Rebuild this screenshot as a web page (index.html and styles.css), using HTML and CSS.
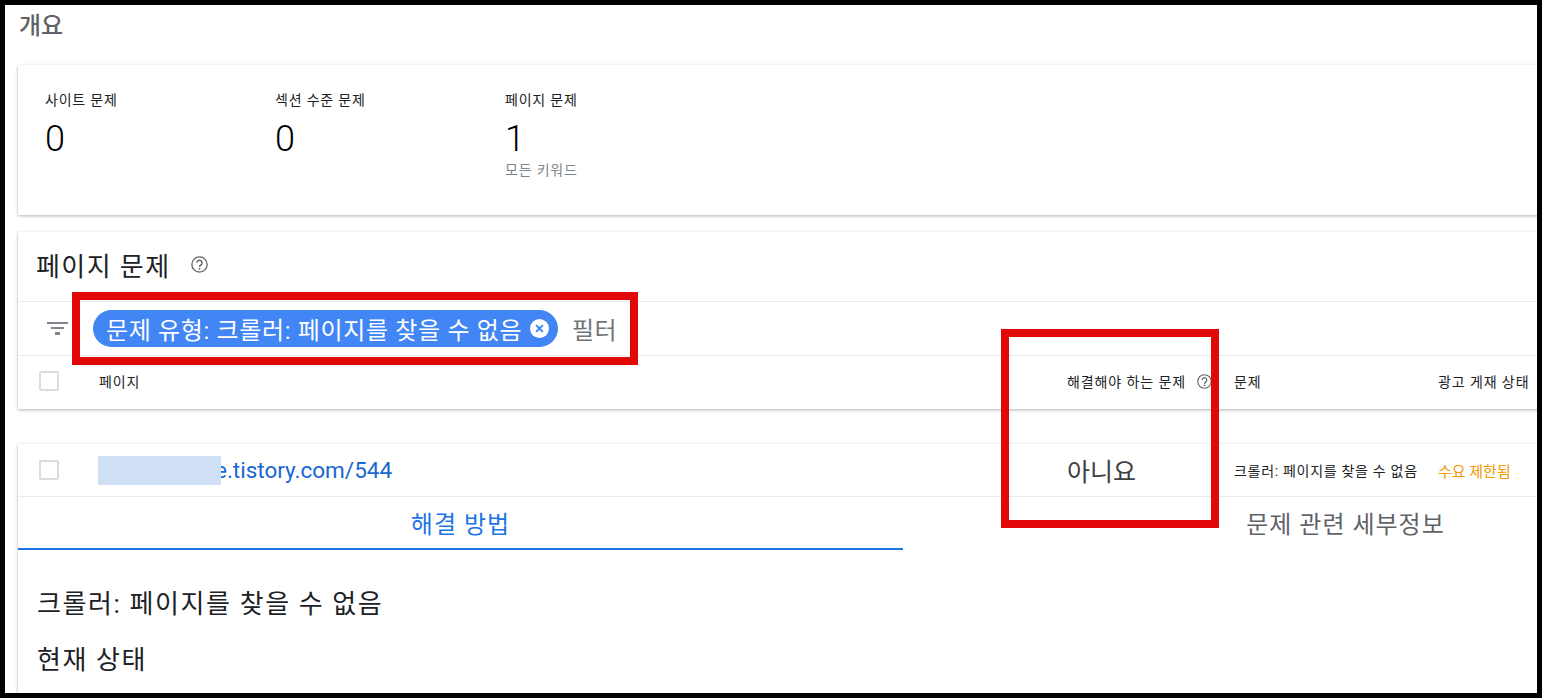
FILE: index.html

```html
<!DOCTYPE html>
<html lang="ko">
<head>
    <meta charset="UTF-8">
    <meta name="viewport" content="width=device-width, initial-scale=1.0">
    <title>개요</title>
    <link rel="stylesheet" href="styles.css">
</head>
<body>

    <div class="frame">
        <h1 class="page-title">개요</h1>

        <div class="card summary">
            <div class="stat">
                <div class="stat-label">사이트 문제</div>
                <div class="stat-value">0</div>
            </div>
            <div class="stat">
                <div class="stat-label">섹션 수준 문제</div>
                <div class="stat-value">0</div>
            </div>
            <div class="stat">
                <div class="stat-label">페이지 문제</div>
                <div class="stat-value">1</div>
                <div class="stat-note">모든 키워드</div>
            </div>
        </div>

        <div class="card issues">
            <div class="issues-head">
                <h2>페이지 문제</h2>
                <svg class="help help-large" viewBox="0 0 24 24"><use href="#help-icon"></use></svg>
            </div>
            <div class="filter-row">
                <svg class="filter-icon" viewBox="0 0 21 14"><path d="M0 0h21v2H0zM4 5h13v2H4zM8 10h5v3H8z"></path></svg>
                <span class="chip">
                    문제 유형: 크롤러: 페이지를 찾을 수 없음
                    <svg class="chip-close" viewBox="0 0 18 18"><circle cx="9" cy="9" r="9" fill="#fff"></circle><path d="M5.8 5.8l6.4 6.4M12.2 5.8l-6.4 6.4" stroke="#4285f4" stroke-width="2"></path></svg>
                </span>
                <span class="filter-text">필터</span>
            </div>
            <div class="table-row table-head">
                <span class="checkbox"></span>
                <span>페이지</span>
                <span class="head-help">해결해야 하는 문제<svg class="help" viewBox="0 0 24 24"><use href="#help-icon"></use></svg></span>
                <span>문제</span>
                <span>광고 게재 상태</span>
            </div>
        </div>

        <div class="card detail">
            <div class="table-row result-row">
                <span class="checkbox"></span>
                <a class="page-link" href="#"><span class="blur-mask"></span>e.tistory.com/544</a>
                <span class="answer">아니요</span>
                <span class="issue-name">크롤러: 페이지를 찾을 수 없음</span>
                <span class="demand">수요 제한됨</span>
            </div>
            <div class="tabs">
                <div class="tab active">해결 방법</div>
                <div class="tab">문제 관련 세부정보</div>
            </div>
            <div class="detail-body">
                <p>크롤러: 페이지를 찾을 수 없음</p>
                <p>현재 상태</p>
            </div>
        </div>

        <div class="red-box box-filter"></div>
        <div class="red-box box-column"></div>
    </div>

    <svg class="icon-defs" width="0" height="0">
        <symbol id="help-icon" viewBox="0 0 24 24">
            <circle cx="12" cy="12" r="10.800" fill="none" stroke="#5f6368" stroke-width="1.800"></circle>
            <path d="M8.400 9.600a3.600 3.600 0 1 1 5.600 3c-1.300.9-2 1.500-2 3" fill="none" stroke="#5f6368" stroke-width="2"></path>
            <path d="M10.900 17h2.200v2.200h-2.200z" fill="#5f6368"></path>
        </symbol>
    </svg>

</body>
</html>
```

FILE: styles.css

```css
* {
    box-sizing: border-box;
}

body {
    margin: 0;
    background-color: #000;
    font-family: 'Roboto', 'Noto Sans CJK KR', sans-serif;
    color: #202124;
}

.frame {
    position: relative;
    height: 698px;
    padding: 0 0 0 13px;
    border: 5px solid #000;
    background-color: #fff;
    overflow: hidden;
}

.icon-defs {
    position: absolute;
}

.page-title {
    margin: 0;
    height: 60px;
    padding: 5px 0 0 1px;
    font-size: 24px;
    line-height: 32px;
    font-weight: 500;
    color: #5f6368;
}

.card {
    width: 1771px;
    background-color: #fff;
    box-shadow: 0 1px 3px rgba(60, 64, 67, 0.4);
}

.summary {
    display: flex;
    height: 150px;
    padding: 25px 0 0 27px;
}

.stat {
    width: 230px;
}

.stat-label {
    font-size: 14px;
    letter-spacing: 0.8px;
    line-height: 20px;
}

.stat-value {
    font-size: 36px;
    font-weight: 300;
    line-height: 40px;
    margin-top: 9px;
    color: #000;
}

.stat-note {
    margin-top: 1px;
    font-size: 14px;
    letter-spacing: 0.8px;
    line-height: 20px;
    color: #80868b;
}

.issues {
    margin-top: 17px;
}

.issues-head {
    display: flex;
    align-items: center;
    height: 70px;
    padding: 0 0 4px 18px;
    border-bottom: 1px solid #e8eaed;
}

.issues-head h2 {
    margin: 0;
    font-size: 26px;
    letter-spacing: 1.4px;
    font-weight: 400;
}

.help {
    width: 15px;
    height: 15px;
}

.help-large {
    width: 17px;
    height: 17px;
    margin-left: 21px;
}

.filter-row {
    display: flex;
    align-items: center;
    height: 54px;
    padding-left: 29px;
    border-bottom: 1px solid #e8eaed;
}

.filter-icon {
    width: 21px;
    height: 14px;
    fill: #80868b;
}

.chip {
    display: flex;
    align-items: center;
    justify-content: space-between;
    width: 465px;
    height: 37px;
    margin-left: 25px;
    padding: 0 9px 0 13px;
    border-radius: 19px;
    background-color: #4285f4;
    color: #fff;
    font-size: 24px;
    letter-spacing: 0.65px;
    white-space: nowrap;
}

.chip-close {
    width: 19px;
    height: 19px;
}

.filter-text {
    margin-left: 14px;
    font-size: 24px;
    letter-spacing: 0.5px;
    color: #70757a;
}

.table-row {
    display: grid;
    grid-template-columns: 60px 968px 167px 204px 1fr;
    align-items: center;
    padding-left: 21px;
}

.table-head {
    height: 53px;
    padding-bottom: 3px;
    font-size: 14px;
    letter-spacing: 0.9px;
}

.head-help {
    display: flex;
    align-items: center;
    gap: 11px;
    white-space: pre;
}

.checkbox {
    width: 20px;
    height: 20px;
    border: 2px solid #dadce0;
    border-radius: 2px;
}

.detail {
    height: 300px;
    margin-top: 35px;
}

.result-row {
    height: 53px;
    border-bottom: 1px solid #e8eaed;
}

.page-link {
    display: flex;
    align-items: center;
    margin-left: -1px;
    font-size: 22.500px;
    color: #1967d2;
    text-decoration: none;
}

.blur-mask {
    width: 123px;
    height: 29px;
    margin-right: -6px;
    background-color: #cfdff5;
    position: relative;
}

.answer {
    font-size: 25px;
    color: #3c4043;
}

.issue-name {
    font-size: 14px;
    letter-spacing: 0.7px;
}

.demand {
    font-size: 15px;
    color: #f29900;
}

.tabs {
    display: flex;
}

.tab {
    width: 885px;
    height: 53px;
    text-align: center;
    font-size: 24px;
    letter-spacing: 1px;
    line-height: 57px;
    color: #5f6368;
}

.tab.active {
    color: #1a73e8;
    border-bottom: 2px solid #1a73e8;
}

.detail-body {
    padding: 36px 0 0 19px;
}

.detail-body p {
    margin: 0 0 20px;
    font-size: 26px;
    letter-spacing: 1.6px;
    line-height: 36px;
}

.red-box {
    position: absolute;
    border: 8px solid #e20808;
}

.box-filter {
    left: 67px;
    top: 287px;
    width: 566px;
    height: 73px;
}

.box-column {
    left: 996px;
    top: 324px;
    width: 218px;
    height: 199px;
}
```
